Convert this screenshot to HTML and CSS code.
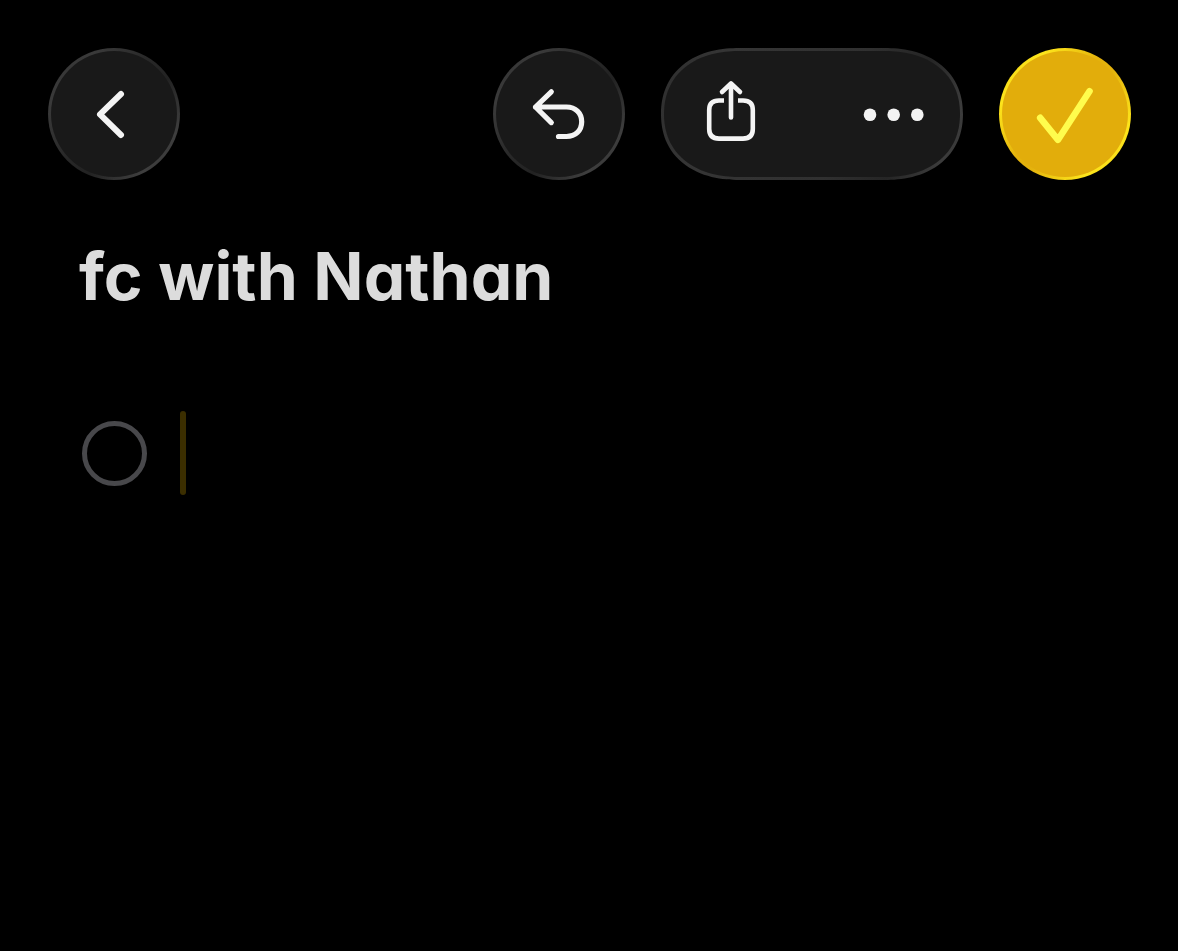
FILE: index.html
```html
<!DOCTYPE html>
<html lang="en">
<head>
<meta charset="utf-8">
<meta name="viewport" content="width=device-width, initial-scale=1">
<title>fc with Nathan</title>
<link rel="stylesheet" href="styles.css">
</head>
<body>
<header class="toolbar">
  <button class="glass round back" type="button" aria-label="Back">
    <svg class="icon" viewBox="0 0 132 132" stroke-width="6"><path d="M73 46 52 66.400 73 87"/></svg>
  </button>
  <button class="glass round" type="button" aria-label="Undo">
    <svg class="icon" viewBox="0 0 132 132" stroke-width="5.200"><path d="M58.300 43.800 42.500 59 58.300 74.600M42.500 59H73.500C82.500 59 88.700 65 88.700 73.800S82.500 88.500 73.500 88.500H65.500"/></svg>
  </button>
  <div class="glass pill">
    <button class="segment" type="button" aria-label="Share">
      <svg class="icon" viewBox="0 0 151 132" stroke-width="4.600">
        <path d="M61 44 70 35.500 79 44M70 36V69.500"/>
        <path stroke-linecap="butt" d="M63 52.500H58Q48.200 52.500 48.200 62V81Q48.200 90.600 58 90.600H82Q91.800 90.600 91.800 81V62Q91.800 52.500 82 52.500H77"/>
      </svg>
    </button>
    <button class="segment" type="button" aria-label="More">
      <svg class="icon dots" viewBox="0 0 151 132"><circle cx="58" cy="66.700" r="6.300"/><circle cx="81.700" cy="66.700" r="6.300"/><circle cx="105.300" cy="66.700" r="6.300"/></svg>
    </button>
  </div>
  <button class="glass round done" type="button" aria-label="Done">
    <svg class="icon" viewBox="0 0 132 132" stroke-width="6.600"><path d="M41.200 69.800 59 91.800 90.500 43.300"/></svg>
  </button>
</header>
<main class="note">
  <h1 class="title">fc with Nathan</h1>
  <div class="item">
    <input class="tick" type="checkbox" aria-label="Mark item as done">
    <span class="caret"></span>
    <input class="entry" type="text" aria-label="Checklist item">
  </div>
</main>
</body>
</html>
```
FILE: styles.css
```css
* {
  box-sizing: border-box;
}

body {
  margin: 0;
  background: #000;
  color: #dcdcdc;
  font-family: Inter, "Liberation Sans", sans-serif;
}

.toolbar {
  display: flex;
  gap: 36px;
  padding: 48px 47px 0 48px;
}

.glass {
  --fill: #191919;
  --rim: linear-gradient(130deg, #303030 0%, #3a3a3a 20%, #282828 45%, #222222 60%, #3e3e3e 82%, #303030 100%);
  height: 132px;
  padding: 0;
  border: 3px solid transparent;
  background: linear-gradient(var(--fill), var(--fill)) padding-box, var(--rim) border-box;
  color: #f4f4f4;
}

.round {
  width: 132px;
  border-radius: 50%;
}

.back {
  margin-right: auto;
}

.pill {
  --rim: linear-gradient(110deg, #2e2e2e 0%, #353535 20%, #303030 60%, #252525 78%, #3c3c3c 92%, #343434 100%);
  display: flex;
  border-radius: 78px / 66px;
  corner-shape: superellipse(1.15);
}

.segment {
  padding: 0;
  border: 0;
  background: none;
  color: inherit;
}

.icon {
  display: block;
  height: 132px;
  margin: -3px;
  fill: none;
  stroke: currentColor;
  stroke-linecap: round;
  stroke-linejoin: round;
}

.segment .icon {
  width: 151px;
}

.segment + .segment {
  margin-left: 6px;
}

.dots {
  fill: currentColor;
  stroke: none;
}

.done {
  --fill: #e2ad0b;
  --rim: linear-gradient(130deg, #f2cf14 0%, #fde51c 20%, #e4b20c 45%, #e4b20c 55%, #fde51c 80%, #f2cf14 100%);
  color: #fffc4d;
}

.note {
  padding: 54px 48px 0 79px;
}

.title {
  margin: 0;
  font-size: 66px;
  line-height: 84px;
  font-weight: 700;
  font-feature-settings: "cv11";
}

.item {
  display: flex;
  align-items: center;
  margin-top: 93px;
  padding-left: 3px;
}

.tick {
  appearance: none;
  width: 65px;
  height: 65px;
  margin: 0;
  border: 5px solid #48484b;
  border-radius: 50%;
}

.caret {
  width: 6px;
  height: 84px;
  margin-left: 33px;
  border-radius: 3px;
  background: #3b2e00;
}

.entry {
  flex: 1;
  min-width: 0;
  height: 84px;
  padding: 0;
  border: 0;
  outline: 0;
  background: none;
  color: inherit;
  font: inherit;
  font-size: 48px;
}
```
